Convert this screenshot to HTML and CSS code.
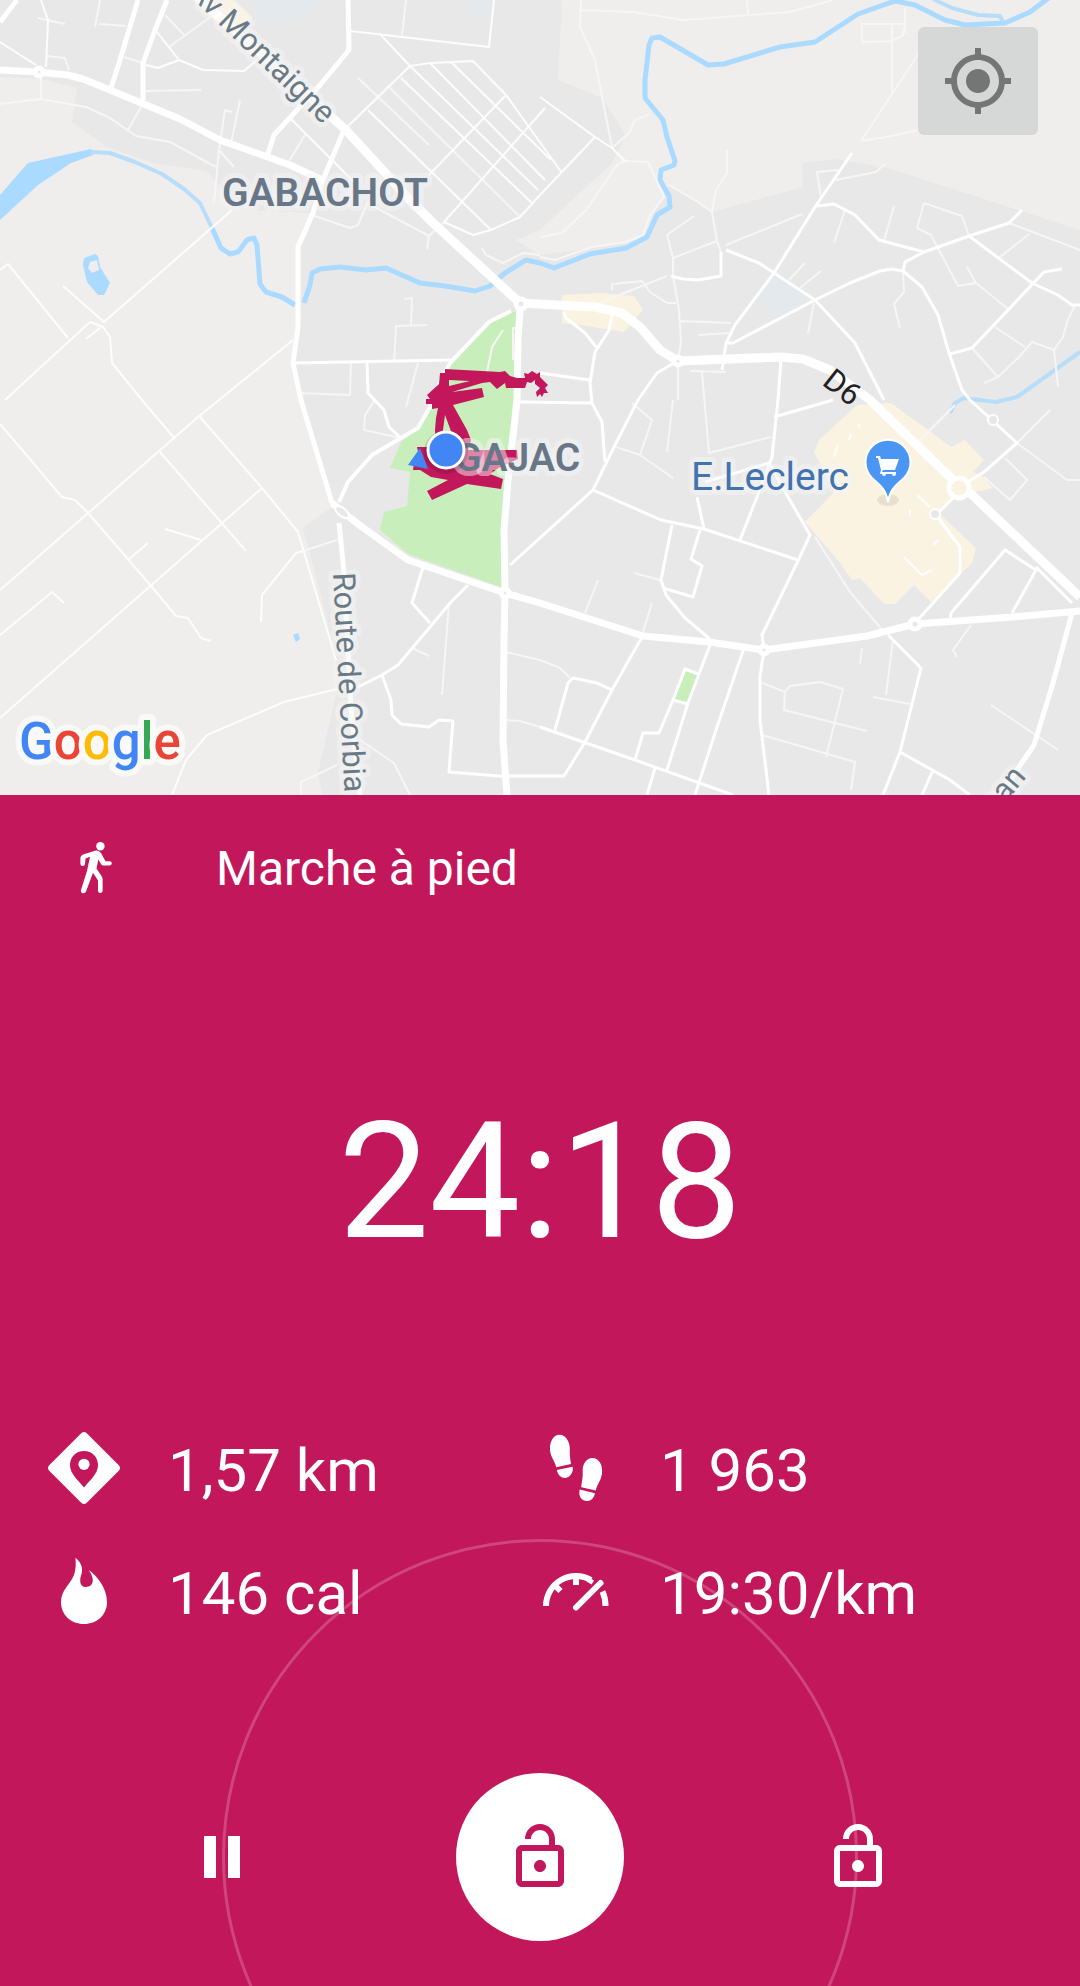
FILE: index.html
```html
<!DOCTYPE html>
<html lang="fr">
<head>
    <meta charset="UTF-8">
    <meta name="viewport" content="width=device-width, initial-scale=1.0">
    <title>Marche à pied</title>
    <link rel="stylesheet" href="styles.css">
</head>
<body>
    <div class="map">
        <svg class="map-canvas" viewBox="0 0 1080 795" role="img" aria-label="Carte">
            <!-- countryside -->
            <path class="rural" d="M0 77L41 79 77 88 72 122 107 147 152 163 207 171 220 187 241 210 312 213 298 247 298 327 293 363 301 400 332 507 303 528 324 607 336 660 337 690 318 773 322 795H0z"/>
            <path class="rural" d="M562 0L558 80 602 98 626 135 612 163 540 230 516 240 540 255 599 247 643 238 654 213 662 197 669 185 712 212 803 187 802 163 836 159 888 168 1080 230V0z"/>
            <!-- blocks -->
            <path class="block" d="M774 275L807 297 805 305 779 316 755 300zM255 0H322L306 17 260 22zM470 0H493V17H470z"/>
            <path class="shops" d="M193 0H234L253 18 224 30zM562 295L602 293 634 296 643 310 624 332 581 325 562 323z"/>
            <path class="shops" d="M857 405L819 440 814 453 822 467 834 492 805 522 840 563 852 580 860 578 884 604H895L914 585 931 602 972 563 976 548 946 520 939 512 953 497 993 488 981 475 973 472 984 460 965 440 951 447 931 432 891 403z"/>
            <path class="park" d="M511 312L489 322 451 362 430 407 418 428 401 442 390 468 410 472 407 506 384 512 380 530 408 554 501 587 504 500 510 453 517 400 516 312zM686 670L698 674 688 703 674 699z"/>
            <!-- water -->
            <path class="lake" d="M0 195L28 163 91 149 93 155 71 163 38 185 0 220z"/>
            <path class="lake" fill-rule="evenodd" d="M84 258L95 254 98 256 100 267 110 283 104 295H98L87 282 83 265zM90 262L97 260 99 270 92 273 88 268z"/>
            <path class="lake" d="M293 635L298 633 300 639 296 642z"/>
            <path class="stream" d="M91 152L110 153 135 162 162 174 184 189 200 203 212 228M933 -1L952 8 978 15 1000 16 1004 24M1080 352L1017 397 996 402 964 398 955 403 950 413"/>
            <path class="river" d="M212 228L221 248 230 254 238 252 247 240 254 238 257 245 260 284 266 292 282 297 295 305M304 303L310 285 312 273 320 269 340 267 366 270 386 268 420 283 445 286 475 291 490 286 505 273 526 260 540 263 554 268 590 254 626 248 647 237 657 215 670 207 669 196 660 180 661 170 674 165 675 161 667 137 663 120 645 98 645 80 649 45 652 38 660 37 708 65 724 64 780 47 815 42 858 14 895 1 915 5 945 20 965 25 1005 23 1030 12 1050 -3"/>

            <!-- paths and dead ends -->
            <path class="road faint" d="M919 53L861 141M861 141L886 137 919 130M924 203L917 228 931 235 958 286 976 283M924 203L962 216 969 236M1009 223L1080 250M1029 234L1000 257M967 267L976 283 1008 309M995 327L1025 347M972 348L998 377M984 383L998 377 1019 357 1032 342 1054 350 1058 387M1075 305L1067 322 1063 337 1054 350M903 272L904 292 894 304 900 328"/>
            <path class="road faint" d="M694 216L667 235 673 258 673 276 679 310 681 342 678 361V400M673 258L717 241M712 212L717 241 721 252M726 245L802 214M727 150V173L716 190 712 212 698 202 669 185M667 276L599 303M612 290V284L642 281 650 292 667 303H676M679 321L731 323M698 335L729 333M702 372L709 453 771 437M690 371L726 372"/>
            <path class="road faint" d="M814 303L808 333M805 263L789 280M821 271L800 288M845 210L834 243M894 206L884 241M838 170L817 172 821 197M836 180L876 172 886 163M862 24H905L903 35 892 41 862 42zM892 24V93M905 8V33"/>
            <path class="road faint" d="M581 0L580 27 595 60 602 97 612 147M581 10L633 12 683 20 790 12 833 0M747 0L748 15M625 161L648 162 664 197 650 215 643 235 626 242 592 247 555 260 540 257M625 161L617 165 602 187 586 210 562 233 540 237M612 148L630 132 635 120 650 114M358 78L429 145M390 88L520 217M406 0L402 35M165 15L184 35M169 47L213 15M38 18L65 24M100 0L95 27M99 24L126 26M46 56L65 58 69 70M124 57L143 63M145 91L201 90"/>
            <path class="road faint" d="M41 73V100M0 104L41 99 86 107 110 118 136 136 170 142 214 166H218M141 107L128 130M240 100L231 143M232 112L225 110 219 150 214 203M219 150L234 167M305 135L288 163M394 362L396 326 427 325M411 325L412 298 404 299M351 363L350 395 300 393M418 363L406 407M312 215L350 228 358 225 367 203 429 236 427 249M429 236L444 222M482 248L486 255 503 263 523 253 540 255M503 330L492 347 487 372M513 360V328H521"/>
            <path class="road faint" d="M375 400L365 415 364 430 401 438M449 603L442 695M360 740L394 763 410 795M337 765L301 782V795M506 652L540 660 560 668 570 678M506 720L520 721 540 727M412 648L429 656M337 540L303 551M616 447L640 455 652 420 632 403M640 455L673 478M673 400L667 452M815 537L850 592 884 632M1017 443L1067 480H1080M1050 410L1017 443M1005 458L1027 480 1010 500 984 477M762 683L785 692 790 686 820 682 843 689 826 757M785 692L784 710 867 731M762 735L855 762 851 790M862 648L860 664M893 640L886 695M873 697L910 704M991 705L1058 750M971 625L953 650 957 657M585 613L598 580M642 635L652 603M634 573L660 580M955 405L920 440"/>

            <!-- lanes -->
            <path class="road lane" d="M232 210L104 322 63 286M0 270L8 264 68 338M5 400L90 322 103 327 110 337 112 363 142 400 175 439M86 339L100 328M293 340L219 400 198 417 0 590M160 452L246 551M200 417L262 488 298 532 336 660M262 488L0 718M0 424L62 497 75 500 89 514 152 587 176 616 188 618 201 638 211 641M128 560L148 543M165 529L201 540M0 635L52 592 64 603M296 553L262 595 261 622M337 689L284 702 207 735 186 760 172 795M303 551L296 553"/>
            <path class="road lane" d="M344 130L410 66 430 63 473 61 506 95 562 173M379 33L410 66M401 78L532 203M410 66L538 190M430 63L545 180M451 62L551 160M368 110L491 230M506 95L429 175M545 108L444 222M595 137L540 195 520 217 491 230 473 235 444 222M540 97L595 137 612 148 625 161M494 0L489 47 350 31M291 119L355 183M157 32L179 60 203 70 244 71 257 60M146 65L158 68 179 60M0 42L36 65M41 0L48 20 46 67"/>
            <path class="road lane wide" d="M852 153L815 207 774 273 735 325 726 343 722 370M726 250L759 263 815 300 855 343 884 400M726 343H733L815 300 850 283 880 271 892 269 903 271 922 287 938 315 949 353 962 390 970 400 1017 443 984 472 958 488M817 206L834 204 855 215 879 240 924 252M903 271L905 262 924 252 969 236 1009 223 1022 210M969 236L1032 283 1058 295 1072 305H1080M1062 269L1044 272 972 348 950 354M721 252V276L698 280 683 279 671 276"/>
            <path class="road lane wide" d="M612 315L609 330 595 352 590 383 592 403 602 422 605 462M564 312L566 318 585 333 597 348M540 373L590 380M674 363L657 373 638 400 614 447 593 490 510 565M781 360L778 400 772 457 757 497 740 540M774 417L833 400M293 363L451 360M367 363L368 393 384 410 389 427 401 438M423 567L412 603 430 623M468 585L451 602 398 665 382 675 358 687M382 675L391 700 392 715 401 724 429 727 439 720 453 721 449 772 499 776 540 776M520 402L592 403"/>
            <path class="road lane wide" d="M642 637L612 690 585 742 564 776H540M540 727L635 760 733 795M555 730L568 683 573 678 597 683 612 690M710 645L688 703 667 770M744 648L716 730 695 795M764 650L760 677 760 720 769 795M698 674L685 669 673 700 659 733 643 733 635 760M673 700L688 704M655 768L647 795M888 635L921 668 900 752 883 795M900 752L950 780 970 795M933 770L922 795M593 490L661 520 704 529 798 560M672 525L661 580 666 595 685 618 710 639M700 530L691 559 702 566 693 597 663 588M697 497L704 529M705 482L769 463 784 490 810 535 797 563 762 635 764 650M915 623L960 573 960 547 936 515 958 493M950 622L951 613 1005 550 1036 570 1012 613M1036 567L1072 603"/>
            <!-- car park aisles -->
            <path class="road lane" d="M834 457L838 445M849 440L851 434M858 428L860 424M904 557L922 575 932 570M910 510V516M917 495L930 507M933 545L938 540"/>

            <!-- streets -->
            <path class="road street" d="M17 0L0 22M138 0L120 60 111 88M167 0L155 30 143 63V100M348 0L349 50 320 85 274 135 267 157M344 130L322 182 313 213 298 247 298 327 293 363 301 400 332 503M339 523L344 573 351 710 360 795M1072 613L1053 683 1034 745 1000 795"/>
            <path class="road park-edge" d="M339 502L348 482 372 455 401 438 418 428 430 407 443 375 451 362 489 322 511 311"/>
            <path class="road avenue" d="M0 70L37 72 68 75 83 79 110 90 180 119 220 140 290 165 322 180M332 503L344 513 362 527 408 560 505 593 540 603 643 636 709 642 764 650 867 636 915 624 1013 617 1080 611M520 310L518 340 517 400 508 480 504 530 505 593 504 640 503 740 507 795"/>
            <path class="road main" d="M190 -10L346 130 410 200 432 222 520 303 595 307 622 313 640 327 660 350 678 361 780 357 803 359 830 370 870 400 953 480 970 493 1080 597"/>
            <g class="roundabout">
                <circle cx="39" cy="72" r="4"/>
                <circle cx="521" cy="304" r="5"/>
                <circle cx="678" cy="361" r="4"/>
                <circle cx="505" cy="593" r="4"/>
                <circle cx="764" cy="650" r="4"/>
                <circle cx="915" cy="624" r="5"/>
                <circle class="big" cx="959" cy="488" r="10"/>
                <circle class="small" cx="935" cy="514" r="5"/>
                <circle class="small" cx="993" cy="420" r="5"/>
                <ellipse class="small" cx="342" cy="512" rx="8" ry="4" transform="rotate(40 342 512)"/>
            </g>

            <!-- walked track -->
            <path class="track" fill-rule="evenodd" d="M445 369L500 372 505 371 510 376 517 378H525L524 373 528 374 532 371 537 374 540 372 540 377 543 380 548 385 545 388 548 393 544 393 542 397 540 394 537 397 536 392 540 388 535 384 535 380 531 383 527 382 525 388H506L505 383 497 389 490 382 482 383 452 392 482 388 484 397 453 405 467 430 471 440 468 450H458L445 415 443 430V445H436L435 430 436 418 438 408 432 409 432 404H426V399H430L427 395 439 384 440 373H445zM449 380L470 381 449 386z"/>
            <path class="track" d="M417 447H427L467 450 517 450 518 459 500 467 490 474 503 479 501 489 467 484 432 500 427 491 448 480 431 477 420 470H413L414 463 420 460z"/>

            <!-- labels -->
            <g class="label">
                <text class="area" x="222" y="206">GABACHOT</text>
                <text class="area" x="455" y="471">GAJAC</text>
                <text class="way" text-anchor="end" transform="translate(323 125) rotate(44)">Av Montaigne</text>
                <text class="way" transform="translate(333 573) rotate(87)">Route de Corbia</text>
                <text class="way" text-anchor="end" transform="translate(1027 777) rotate(-50)">ean</text>
                <text class="way-number" transform="translate(821 384) rotate(38)">D6</text>
                <text class="place" x="691" y="490">E.Leclerc</text>
            </g>

            <!-- shop pin -->
            <ellipse class="pin-shadow" cx="888" cy="500" rx="11" ry="6"/>
            <path class="pin" d="M888 502C886 489 880 485 872 478A22.5 22.5 0 1 1 904 478C896 485 890 489 888 502z"/>
            <path fill="#fff" d="M876 456H880L881 459H899L895 470H883L882 472H896V474H880L881 470 878 458H876z"/>
            <circle cx="884" cy="474" r="2" fill="#fff"/>
            <circle cx="894" cy="474" r="2" fill="#fff"/>

            <!-- current position -->
            <path class="heading" d="M408 465L420 448 428 469z"/>
            <circle class="position-shadow" cx="446" cy="452" r="22"/>
            <circle class="position" cx="446" cy="450" r="18"/>

            <text class="logo" x="19" y="759"><tspan class="blue">G</tspan><tspan class="red">o</tspan><tspan class="yellow">o</tspan><tspan class="blue">g</tspan><tspan class="green">l</tspan><tspan class="red">e</tspan></text>
        </svg>
        <button class="locate" type="button" aria-label="Ma position">
            <svg class="icon" viewBox="0 0 24 24"><path d="M12 8c-2.210 0-4 1.790-4 4s1.790 4 4 4 4-1.790 4-4-1.790-4-4-4zm8.940 3A8.994 8.994 0 0 0 13 3.060V1h-2v2.060A8.994 8.994 0 0 0 3.060 11H1v2h2.060A8.994 8.994 0 0 0 11 20.940V23h2v-2.060A8.994 8.994 0 0 0 20.940 13H23v-2h-2.060zM12 19c-3.870 0-7-3.130-7-7s3.130-7 7-7 7 3.130 7 7-3.130 7-7 7z"/></svg>
        </button>
    </div>

    <main class="panel">
        <div class="activity">
            <svg class="icon" viewBox="0 0 72 72">
                <circle cx="40.400" cy="13.300" r="4.200"/>
                <path d="M36 17.500L23 21.500Q20.400 22.500 20.400 25V31Q20.600 33 22.700 33T25 31L25.600 25.500 30 23.700 27 38 21 57Q20.500 60 23 60.200T26 58.500L33 39.700 38 47.500V58Q38.200 60 40.300 60T42.600 58V46Q42.500 44.500 41.500 43L36.500 35.500 38.300 26.500 41 31Q42 32.500 43.500 32.500H49.500Q51.800 32.300 51.800 30.300T49.500 28.200H45.500L41 20Q39 17 36 17.500z"/>
            </svg>
            <span>Marche à pied</span>
        </div>

        <div class="timer">24:18</div>

        <div class="stats">
            <div class="stat">
                <svg class="icon" viewBox="0 0 72 72"><path fill-rule="evenodd" d="M33.500 1Q36 -1 38.500 1L71 33.500Q73 36 71 38.500L38.500 71Q36 73 33.500 71L1 38.500Q-1 36 1 33.500zM36 19C28 19 22 25 22 33 22 42 30 48 36 55.500 42 48 50 42 50 33 50 25 44 19 36 19z"/><circle cx="36" cy="32.300" r="5.600"/></svg>
                <span>1,57 km</span>
            </div>
            <div class="stat">
                <svg class="icon" viewBox="0 0 72 72"><path d="M19.600 2.700C13 2.700 9.500 10 10 18 10.500 25 15 29 16.200 35.300L31 32C30 25 30 25 29.700 20 31 11 26 2.700 19.600 2.700zM16.800 38L32.500 34.800C34 40 30 45.500 25.500 46 21 46.200 18 43 16.800 38zM52.300 26C46 26 42 33 42.700 40 43 46 41.800 49 41.300 55.300L55.800 58.500C57 52 61 49 62 41.500 63 33 59 26 52.300 26zM39.700 57.600L55 61.200C54 66 51 69 47 69 42 69 38 65 39.700 57.600z"/></svg>
                <span>1 963</span>
            </div>
            <div class="stat">
                <svg class="icon" viewBox="0 0 72 72"><path d="M27.400 2.700C34 8 35 14 33.500 19 31.500 24 31 32 38 32 46 31.500 47 24 40.800 15 49 21 59 33 59 47 59 60 49 69 36 69 23 69 13 60 13 47 13 35 22 30 26 20 28 14 28 8 27.400 2.700z"/></svg>
                <span>146 cal</span>
            </div>
            <div class="stat">
                <svg class="icon gauge" viewBox="0 0 72 72">
                    <path d="M6 51A30 30 0 0 1 51 25M62.500 36.500Q65.500 43 65.500 51M36 20V30M14 29.500L20.500 36M51.500 24L49 28"/>
                    <path class="needle" d="M36 52.500L60.500 28"/>
                </svg>
                <span>19:30/km</span>
            </div>
        </div>

        <div class="controls">
            <div class="ring"></div>
            <button class="control" type="button" aria-label="Pause">
                <svg class="icon" viewBox="0 0 24 24"><path d="M6 19h4V5H6v14zm8-14v14h4V5h-4z"/></svg>
            </button>
            <button class="control control-main" type="button" aria-label="Déverrouiller">
                <svg class="icon" viewBox="0 0 24 24"><path d="M12 17c1.100 0 2-.9 2-2s-.9-2-2-2-2 .9-2 2 .9 2 2 2zm6-9h-1V6c0-2.760-2.240-5-5-5S7 3.240 7 6h2c0-1.660 1.340-3 3-3s3 1.340 3 3v2H6c-1.100 0-2 .9-2 2v10c0 1.100.9 2 2 2h12c1.100 0 2-.9 2-2V10c0-1.100-.9-2-2-2zm0 12H6V10h12v10z"/></svg>
            </button>
            <button class="control" type="button" aria-label="Verrouiller">
                <svg class="icon" viewBox="0 0 24 24"><path d="M12 17c1.100 0 2-.9 2-2s-.9-2-2-2-2 .9-2 2 .9 2 2 2zm6-9h-1V6c0-2.760-2.240-5-5-5S7 3.240 7 6h2c0-1.660 1.340-3 3-3s3 1.340 3 3v2H6c-1.100 0-2 .9-2 2v10c0 1.100.9 2 2 2h12c1.100 0 2-.9 2-2V10c0-1.100-.9-2-2-2zm0 12H6V10h12v10z"/></svg>
            </button>
        </div>
    </main>
</body>
</html>
```

FILE: styles.css
```css
* {
    box-sizing: border-box;
}

body {
    margin: 0;
    min-height: 100vh;
    display: flex;
    flex-direction: column;
    font-family: Roboto, "Liberation Sans", sans-serif;
    color: #fff;
    background-color: #c2185b;
}

button {
    padding: 0;
    border: none;
    background: none;
    color: inherit;
    cursor: pointer;
}

.icon {
    display: block;
    flex: none;
    width: 72px;
    height: 72px;
    fill: currentColor;
}

/* Map */
.map {
    position: relative;
    background-color: #e8e8e8;
}

.map-canvas {
    display: block;
    width: 100%;
    height: auto;
}

.rural {
    fill: #efeeec;
}

.block {
    fill: #e4e9ed;
}

.shops {
    fill: #fbf3e1;
}

.park {
    fill: #c8efbb;
}

.lake {
    fill: #aadaff;
}

.river, .stream, .road {
    fill: none;
    stroke-linejoin: round;
}

.river {
    stroke: #aadaff;
    stroke-width: 5;
}

.stream {
    stroke: #b8ddf9;
    stroke-width: 4;
}

.road {
    stroke: #fff;
}

.faint {
    stroke: #f6f6f6;
    stroke-width: 2;
}

.lane {
    stroke: #fdfdfc;
    stroke-width: 2;
}

.wide {
    stroke: #fff;
    stroke-width: 3;
}

.park-edge {
    stroke-width: 4;
}

.street {
    stroke-width: 5;
}

.avenue {
    stroke-width: 7;
}

.main {
    stroke-width: 9;
}

.roundabout {
    fill: #e8e8e8;
    stroke: #fff;
    stroke-width: 5;
}

.roundabout .small {
    stroke-width: 2;
}

.roundabout .big {
    fill: #fbf3e1;
}

.track {
    fill: #c2185b;
}

.label text {
    paint-order: stroke;
    stroke: rgba(245, 245, 245, 0.5);
    stroke-width: 10px;
    stroke-linejoin: round;
    fill: #6a7a85;
}

.label .area {
    font-size: 39px;
    font-weight: 600;
    fill: #687787;
}

.label .way {
    font-size: 31px;
}

.label .way-number {
    font-size: 31px;
    fill: #222;
    stroke: none;
}

.label .place {
    font-size: 39px;
    fill: #4272b0;
}

.pin {
    fill: #4b96f3;
    stroke: #fff;
    stroke-width: 2;
}

.pin-shadow {
    fill: #e9e1d0;
}

.heading {
    fill: #4285f4;
}

.position {
    fill: #4285f4;
    stroke: #fff;
    stroke-width: 3;
}

.position-shadow {
    fill: rgba(0, 0, 0, 0.12);
}

.logo {
    font-size: 51px;
    font-weight: 500;
    paint-order: stroke;
    stroke: #f9f9f8;
    stroke-width: 12px;
    stroke-linejoin: round;
}

.blue {
    fill: #4285f4;
}

.red {
    fill: #e94435;
}

.yellow {
    fill: #fbbc05;
}

.green {
    fill: #34a853;
}

.locate {
    position: absolute;
    top: 27px;
    right: 42px;
    width: 120px;
    height: 108px;
    display: flex;
    align-items: center;
    justify-content: center;
    border-radius: 6px;
    background-color: #d6d8d7;
    color: #757575;
}

/* Workout panel */
.panel {
    flex: 1;
    display: flex;
    flex-direction: column;
    overflow: hidden;
}

.activity {
    display: flex;
    align-items: center;
    gap: 84px;
    padding: 37px 60px 26px;
    font-size: 48px;
    line-height: 74px;
}

.timer {
    flex: 1;
    display: flex;
    align-items: center;
    justify-content: center;
    font-size: 162px;
    line-height: 190px;
}

.stats {
    display: grid;
    grid-template-columns: 1fr 1fr;
    row-gap: 45px;
    padding: 0 48px;
    font-size: 60px;
    line-height: 78px;
}

.stat {
    position: relative;
    z-index: 1;
    display: flex;
    align-items: flex-start;
    gap: 48px;
}

.gauge {
    fill: none;
    stroke: currentColor;
    stroke-width: 6;
}

.needle {
    stroke-linecap: round;
}

.controls {
    position: relative;
    display: flex;
    align-items: center;
    justify-content: center;
    gap: 198px;
    margin: 140px 0 45px;
}

.ring {
    position: absolute;
    top: 50%;
    left: 50%;
    width: 636px;
    height: 636px;
    border: 3px solid rgba(255, 255, 255, 0.2);
    border-radius: 50%;
    transform: translate(-50%, -50%);
    pointer-events: none;
}

.control {
    position: relative;
}

.control-main {
    width: 168px;
    height: 168px;
    display: flex;
    align-items: center;
    justify-content: center;
    border-radius: 50%;
    background-color: #fff;
    color: #c2185b;
}
```
